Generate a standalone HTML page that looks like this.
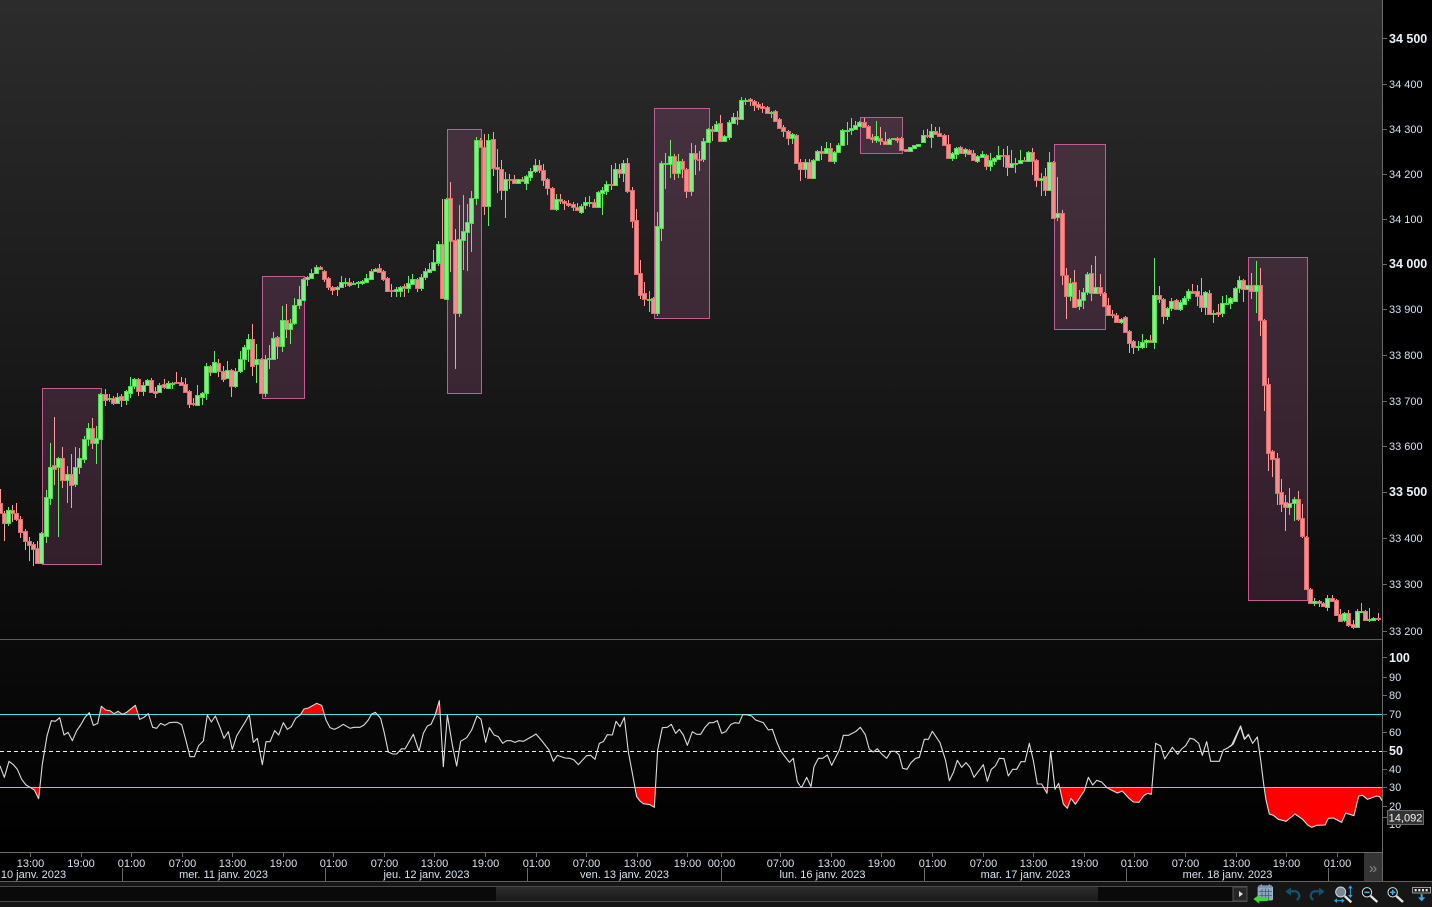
<!DOCTYPE html>
<html lang="fr"><head><meta charset="utf-8"><title>Chart</title>
<style>
html,body{margin:0;padding:0;background:#000;width:1432px;height:907px;overflow:hidden}
svg{display:block;font-family:"Liberation Sans",sans-serif}
.p{font-size:11px;fill:#d2e2f4}
.b{font-size:12.5px;font-weight:bold;fill:#e8f2fc}
.t{font-size:11px;fill:#d6e4f2;text-anchor:middle}
</style></head><body>
<svg width="1432" height="907" viewBox="0 0 1432 907" xmlns="http://www.w3.org/2000/svg">
<defs>
<linearGradient id="bg" x1="0" y1="0" x2="0" y2="1"><stop offset="0" stop-color="#2c2c2c"/><stop offset="1" stop-color="#0a0a0a"/></linearGradient>
<linearGradient id="bg2" x1="0" y1="0" x2="0" y2="1"><stop offset="0" stop-color="#0b0b0b"/><stop offset="1" stop-color="#000"/></linearGradient>
<linearGradient id="th" x1="0" y1="0" x2="0" y2="1"><stop offset="0" stop-color="#2c2c2c"/><stop offset="1" stop-color="#1a1a1a"/></linearGradient>
</defs>
<rect width="1432" height="907" fill="#000"/>
<rect width="1382" height="639" fill="url(#bg)"/>
<rect y="640" width="1382" height="212" fill="url(#bg2)"/>

<g fill="#c864a0" fill-opacity=".2" stroke="#c25c92" stroke-width="1">
<rect x="42.5" y="388.5" width="59" height="176"/>
<rect x="262.5" y="276.5" width="42" height="122"/>
<rect x="447.5" y="129.5" width="34" height="264"/>
<rect x="654.5" y="108.5" width="55" height="210"/>
<rect x="860.5" y="117.5" width="42" height="36"/>
<rect x="1054.5" y="144.5" width="51" height="185"/>
<rect x="1248.5" y="257.5" width="59" height="343"/>
</g>

<!-- wicks -->
<path transform="translate(-.5 0)" fill="none" stroke="#ff9c9c" stroke-width="1" d="M1 489V514M5 511V541M13 505V522M17 503V521M21 516V538M26 529V550M30 537V561M34 542V566M38 541V564M55 417V485M63 447V488M72 454V508M93 418V449M106 389V406M114 396V405M122 394V407M139 378V396M152 378V393M156 387V398M165 379V389M177 372V384M182 377V386M186 378V393M190 390V408M194 398V406M211 365V376M219 359V377M224 366V382M232 369V397M253 324V376M262 358V394M278 336V359M287 304V338M321 266V270M325 270V282M329 277V290M333 286V295M350 278V287M380 264V273M384 270V281M388 277V292M392 284V297M405 284V297M418 278V292M443 199V299M451 182V272M456 229V369M481 138V148M485 134V215M494 132V176M498 149V193M502 160V200M510 174V189M515 175V184M523 177V182M540 160V173M544 164V186M548 178V195M553 187V210M561 194V204M565 200V210M569 200V207M574 202V211M578 203V211M595 199V208M612 165V190M620 164V178M628 158V193M633 187V228M637 209V275M641 260V299M645 282V306M654 297V314M675 154V180M683 159V178M687 168V198M696 145V175M700 151V171M713 126V141M721 115V142M738 111V125M751 98V106M755 100V111M759 102V110M763 103V113M768 106V114M776 110V122M780 118V129M784 125V137M789 130V145M797 134V164M801 159V181M810 159V179M822 146V160M831 143V162M865 118V128M869 125V139M873 134V143M881 127V145M886 132V145M898 137V143M902 137V151M928 129V138M936 127V135M940 127V137M945 134V146M949 135V159M961 146V154M970 149V155M974 150V161M987 154V170M1004 149V167M1008 146V176M1025 157V162M1033 148V175M1037 159V187M1046 168V196M1054 161V219M1063 210V285M1067 268V319M1075 270V308M1092 265V301M1101 274V296M1105 292V307M1109 298V316M1113 310V318M1117 313V323M1126 316V333M1130 330V353M1134 340V354M1151 335V343M1160 286V303M1164 298V324M1177 299V310M1193 284V294M1198 285V306M1202 278V312M1210 290V315M1219 304V317M1244 279V302M1252 273V299M1261 268V336M1265 319V411M1269 378V471M1273 450V477M1278 453V505M1282 479V512M1286 495V531M1299 491V521M1303 504V538M1307 536V590M1311 588V604M1320 600V607M1324 602V607M1333 595V602M1337 599V616M1341 609V622M1349 610V627M1354 620V629M1366 610V621M1379 613V621"/>
<path transform="translate(-.5 0)" fill="none" stroke="#62ec62" stroke-width="1" d="M9 507V526M42 532V564M47 490V543M51 443V505M59 457V537M68 466V503M76 447V487M80 448V474M85 436V463M89 423V446M97 426V464M101 393V440M110 394V402M118 393V404M127 390V405M131 377V398M135 378V389M144 382V396M148 379V386M160 383V393M169 381V389M173 382V389M198 385V406M203 392V405M207 363V400M215 351V373M228 361V379M236 368V388M241 351V373M245 345V370M249 334V362M257 344V383M266 355V397M270 345V369M274 332V360M283 306V352M291 319V344M295 298V325M300 286V309M304 278V301M308 276V286M312 269V279M317 265V274M338 286V296M342 276V288M346 278V287M354 281V285M359 281V288M363 280V285M367 274V283M372 269V280M376 268V272M397 287V297M401 286V297M409 276V293M413 274V285M422 274V291M426 268V280M430 263V273M434 250V271M439 241V266M447 198V300M460 205V317M464 195V270M468 204V271M472 191V252M477 137V205M489 134V226M506 172V218M527 175V190M531 168V181M536 159V173M557 194V211M582 204V214M586 197V209M590 196V207M599 191V208M603 187V215M607 181V195M616 163V186M624 160V182M650 291V312M658 212V316M662 161V241M666 153V189M671 140V178M679 154V178M692 143V196M704 138V162M709 128V143M717 121V132M725 135V142M730 120V140M734 113V124M742 97V120M746 98V105M772 111V118M793 133V144M806 159V178M814 159V179M818 150V161M827 142V154M835 151V164M839 143V153M843 129V146M848 122V145M852 118V135M856 121V130M860 121V127M877 121V143M890 138V145M924 130V143M932 124V148M953 152V161M957 147V159M966 148V157M978 155V163M983 151V158M991 153V171M995 157V165M999 146V160M1012 150V168M1016 158V173M1021 150V164M1029 151V162M1042 173V196M1050 152V191M1058 177V221M1071 278V301M1080 290V310M1084 288V309M1088 272V295M1096 256V294M1122 318V324M1139 341V351M1143 334V349M1147 339V348M1155 258V349M1168 307V320M1172 298V311M1181 300V311M1185 296V305M1189 289V301M1206 291V315M1214 310V323M1223 296V317M1227 295V305M1231 297V309M1236 287V302M1240 276V293M1257 261V313M1290 488V515M1295 497V521M1315 598V606M1328 595V611M1345 612V622M1358 609V628M1362 603V613M1370 608V622M1374 617V621"/>

<!-- bodies -->
<path transform="translate(-.5 .5)" fill="#f28e8e" stroke="#e46c6c" stroke-width="1" d="M-1 503h4v10h-4zM3 513h4v10h-4zM11 510h4v3h-4zM15 513h4v6h-4zM19 519h4v13h-4zM24 531h4v10h-4zM28 541h4v4h-4zM32 544h4v5h-4zM36 548h4v15h-4zM53 465h4v4h-4zM61 458h4v22h-4zM70 474h4v11h-4zM91 428h4v15h-4zM104 394h4v6h-4zM112 398h4v5h-4zM120 396h4v4h-4zM137 379h4v12h-4zM150 380h4v12h-4zM154 391h4v2h-4zM163 384h4v3h-4zM175 382h4v1h-4zM180 382h4v3h-4zM184 384h4v8h-4zM188 391h4v13h-4zM192 403h4v1h-4zM209 366h4v6h-4zM217 363h4v8h-4zM222 371h4v8h-4zM230 370h4v16h-4zM251 339h4v27h-4zM260 359h4v34h-4zM276 337h4v9h-4zM285 320h4v9h-4zM319 267h4v2h-4zM323 271h4v8h-4zM327 278h4v9h-4zM331 287h4v3h-4zM348 282h4v3h-4zM378 268h4v4h-4zM382 271h4v8h-4zM386 278h4v13h-4zM390 290h4v1h-4zM403 286h4v2h-4zM416 279h4v9h-4zM441 244h4v54h-4zM449 198h4v43h-4zM454 240h4v73h-4zM479 140h4v7h-4zM483 147h4v59h-4zM492 139h4v29h-4zM496 167h4v2h-4zM500 169h4v21h-4zM508 179h4v1h-4zM513 179h4v4h-4zM521 179h4v2h-4zM538 165h4v5h-4zM542 170h4v10h-4zM546 179h4v9h-4zM551 188h4v21h-4zM559 199h4v2h-4zM563 201h4v2h-4zM567 203h4v2h-4zM572 204h4v3h-4zM576 207h4v3h-4zM593 202h4v5h-4zM610 184h4v1h-4zM618 169h4v4h-4zM626 163h4v28h-4zM631 190h4v31h-4zM635 220h4v54h-4zM639 273h4v22h-4zM643 293h4v6h-4zM652 298h4v15h-4zM673 156h4v17h-4zM681 161h4v8h-4zM685 169h4v22h-4zM694 153h4v6h-4zM698 159h4v1h-4zM711 129h4v2h-4zM719 123h4v18h-4zM736 117h4v2h-4zM749 99h4v2h-4zM753 101h4v4h-4zM757 104h4v3h-4zM761 106h4v2h-4zM766 107h4v6h-4zM774 111h4v10h-4zM778 119h4v9h-4zM782 127h4v4h-4zM787 131h4v7h-4zM795 135h4v28h-4zM799 162h4v7h-4zM808 162h4v16h-4zM820 151h4v2h-4zM829 148h4v13h-4zM863 122h4v5h-4zM867 126h4v12h-4zM871 137h4v2h-4zM879 138h4v3h-4zM884 141h4v3h-4zM896 138h4v2h-4zM900 138h4v12h-4zM905 149h4v2h-4zM926 135h4v1h-4zM934 131h4v3h-4zM938 133h4v3h-4zM943 135h4v10h-4zM947 144h4v14h-4zM959 147h4v6h-4zM968 150h4v4h-4zM972 153h4v7h-4zM985 155h4v11h-4zM1002 155h4v1h-4zM1006 155h4v12h-4zM1023 160h4v1h-4zM1031 152h4v9h-4zM1035 160h4v20h-4zM1044 176h4v14h-4zM1052 162h4v56h-4zM1061 213h4v62h-4zM1065 275h4v21h-4zM1073 282h4v25h-4zM1090 273h4v20h-4zM1099 287h4v6h-4zM1103 293h4v13h-4zM1107 305h4v10h-4zM1111 314h4v1h-4zM1115 315h4v7h-4zM1124 317h4v15h-4zM1128 331h4v12h-4zM1132 341h4v6h-4zM1149 340h4v2h-4zM1158 295h4v4h-4zM1162 299h4v17h-4zM1175 300h4v9h-4zM1191 291h4v2h-4zM1196 291h4v5h-4zM1200 295h4v12h-4zM1208 293h4v21h-4zM1217 312h4v2h-4zM1242 280h4v9h-4zM1250 285h4v6h-4zM1259 285h4v35h-4zM1263 320h4v65h-4zM1267 384h4v69h-4zM1271 451h4v8h-4zM1276 458h4v35h-4zM1280 492h4v12h-4zM1284 502h4v5h-4zM1297 499h4v20h-4zM1301 518h4v18h-4zM1305 537h4v52h-4zM1309 589h4v14h-4zM1318 601h4v2h-4zM1322 603h4v3h-4zM1331 598h4v3h-4zM1335 600h4v15h-4zM1339 614h4v7h-4zM1347 613h4v12h-4zM1352 624h4v3h-4zM1364 611h4v9h-4zM1377 618h4v1h-4z"/>
<path transform="translate(-.5 .5)" fill="#8aea8a" stroke="#4cdc4c" stroke-width="1" d="M7 510h4v13h-4zM40 533h4v30h-4zM45 497h4v39h-4zM49 467h4v31h-4zM57 458h4v9h-4zM66 474h4v6h-4zM74 467h4v17h-4zM78 458h4v9h-4zM83 439h4v20h-4zM87 428h4v11h-4zM95 438h4v5h-4zM99 394h4v45h-4zM108 398h4v1h-4zM116 397h4v6h-4zM125 391h4v9h-4zM129 386h4v7h-4zM133 379h4v7h-4zM142 385h4v6h-4zM146 380h4v5h-4zM158 385h4v7h-4zM167 383h4v5h-4zM171 383h4v1h-4zM196 395h4v10h-4zM201 393h4v4h-4zM205 366h4v27h-4zM213 362h4v10h-4zM226 370h4v8h-4zM234 371h4v15h-4zM239 359h4v12h-4zM243 347h4v12h-4zM247 339h4v10h-4zM255 359h4v5h-4zM264 359h4v34h-4zM268 358h4v1h-4zM272 338h4v21h-4zM281 320h4v26h-4zM289 323h4v6h-4zM293 305h4v18h-4zM298 299h4v6h-4zM302 279h4v21h-4zM306 277h4v2h-4zM310 273h4v5h-4zM315 267h4v6h-4zM336 287h4v2h-4zM340 282h4v5h-4zM344 282h4v1h-4zM352 283h4v1h-4zM357 282h4v1h-4zM361 281h4v2h-4zM365 278h4v4h-4zM370 271h4v8h-4zM374 269h4v2h-4zM395 289h4v2h-4zM399 287h4v4h-4zM407 283h4v5h-4zM411 279h4v5h-4zM420 277h4v11h-4zM424 271h4v6h-4zM428 269h4v3h-4zM432 262h4v8h-4zM437 244h4v19h-4zM445 199h4v100h-4zM458 239h4v74h-4zM462 231h4v9h-4zM466 222h4v10h-4zM470 198h4v25h-4zM475 140h4v58h-4zM487 140h4v66h-4zM504 179h4v11h-4zM517 179h4v4h-4zM525 176h4v7h-4zM529 171h4v6h-4zM534 165h4v6h-4zM555 199h4v10h-4zM580 206h4v6h-4zM584 202h4v3h-4zM588 202h4v1h-4zM597 192h4v15h-4zM601 190h4v3h-4zM605 184h4v7h-4zM614 169h4v16h-4zM622 163h4v10h-4zM648 299h4v1h-4zM656 226h4v87h-4zM660 163h4v65h-4zM664 163h4v1h-4zM669 156h4v8h-4zM677 161h4v12h-4zM690 153h4v38h-4zM702 141h4v18h-4zM707 129h4v13h-4zM715 124h4v7h-4zM723 136h4v5h-4zM728 122h4v15h-4zM732 117h4v6h-4zM740 100h4v19h-4zM744 100h4v1h-4zM770 112h4v1h-4zM791 134h4v4h-4zM804 162h4v7h-4zM812 160h4v18h-4zM816 151h4v9h-4zM825 148h4v5h-4zM833 152h4v9h-4zM837 145h4v7h-4zM841 130h4v15h-4zM846 130h4v1h-4zM850 128h4v2h-4zM854 125h4v4h-4zM858 122h4v4h-4zM875 136h4v4h-4zM888 139h4v5h-4zM892 138h4v1h-4zM909 147h4v4h-4zM913 145h4v3h-4zM917 144h4v2h-4zM922 135h4v7h-4zM930 131h4v6h-4zM951 153h4v5h-4zM955 148h4v6h-4zM964 149h4v4h-4zM976 156h4v5h-4zM981 154h4v3h-4zM989 160h4v6h-4zM993 158h4v3h-4zM997 155h4v4h-4zM1010 163h4v4h-4zM1014 163h4v1h-4zM1019 160h4v3h-4zM1027 152h4v9h-4zM1040 178h4v2h-4zM1048 162h4v28h-4zM1056 213h4v4h-4zM1069 283h4v13h-4zM1078 299h4v7h-4zM1082 292h4v8h-4zM1086 274h4v18h-4zM1094 287h4v6h-4zM1120 319h4v3h-4zM1137 346h4v1h-4zM1141 342h4v5h-4zM1145 340h4v2h-4zM1153 295h4v47h-4zM1166 308h4v8h-4zM1170 301h4v7h-4zM1179 302h4v7h-4zM1183 298h4v6h-4zM1187 291h4v7h-4zM1204 292h4v15h-4zM1212 313h4v1h-4zM1221 303h4v10h-4zM1225 303h4v1h-4zM1229 298h4v5h-4zM1234 288h4v13h-4zM1238 280h4v8h-4zM1246 285h4v4h-4zM1255 285h4v6h-4zM1288 503h4v4h-4zM1293 499h4v4h-4zM1313 601h4v2h-4zM1326 598h4v9h-4zM1343 613h4v7h-4zM1356 611h4v16h-4zM1360 611h4v1h-4zM1368 619h4v1h-4zM1372 618h4v2h-4z"/>

<!-- panel separators -->
<rect y="639" width="1382" height="1" fill="#5c5c5c"/>

<!-- RSI fills -->
<g transform="translate(0 690) scale(.33333)" fill="#f00">
<polygon points="88,292 103,300 116,326 118,292"/>
<polygon points="300,73 304,49 317,60 330,62 342,71 354,64 367,73 375,70 380,67 406,46 414,73"/>
<polygon points="904,73 912,57 925,54 938,47 950,40 965,46 972,73"/>
</g>
<g transform="translate(350 690) scale(.33333)" fill="#f00">
<polygon points="256,73 268,32 270,73"/>
<polygon points="858,292 860,320 870,333 880,341 900,344 913,352 917,292"/>
</g>
<g transform="translate(800 690) scale(.33333)" fill="#f00">
<polygon points="735,292 741,310 742,292"/>
<polygon points="778,292 790,342 802,355 813,325 826,343 853,302 858,292"/>
<polygon points="912,292 930,298 952,309 967,303 985,323 1000,336 1017,337 1032,316 1043,310 1054,313 1056,292"/>
</g>
<g transform="translate(1230 640) scale(.33333)" fill="#f00">
<polygon points="102,441 108,480 118,522 130,526 145,538 168,544 195,522 218,538 233,555 245,562 260,556 285,555 295,535 310,534 335,547 347,519 372,527 386,468 398,466 412,478 440,468 449,470 456,482 456,441"/>
</g>

<!-- RSI levels -->
<rect y="714" width="1382" height="1" fill="#3fe8e8"/>
<rect y="787" width="1382" height="1" fill="#3fe8e8"/>
<path d="M0 751.5H1382" stroke="#eee" stroke-width="1" stroke-dasharray="4 3"/>

<!-- RSI line -->
<g fill="none" stroke="#dcdcdc" stroke-width="3.3" stroke-linejoin="round">
<polyline transform="translate(0 690) scale(.33333)" points="0,228 13,262 27,214 40,224 52,238 65,268 78,285 90,292 103,300 116,326 127,222 141,138 154,92 166,94 179,83 192,135 204,127 217,152 230,122 242,105 255,82 268,68 280,106 293,100 304,49 317,60 330,62 342,71 354,64 367,73 380,67 406,46 419,88 432,82 445,71 458,112 470,115 482,100 495,106 508,98 520,97 532,97 545,104 558,152 570,200 583,200 596,167 610,153 622,75 634,96 646,78 660,112 672,145 685,125 697,178 710,138 722,118 735,97 748,74 760,157 772,145 787,224 798,155 810,155 824,122 836,135 850,98 862,118 874,110 887,85 900,76 912,57 925,54 938,47 950,40 965,46 978,90 990,113 1003,118 1016,112 1030,103 1050,115"/>
<polyline transform="translate(350 690) scale(.33333)" points="0,115 12,112 30,112 42,105 55,90 65,72 76,67 92,85 102,125 115,186 128,192 140,192 155,176 165,177 190,133 207,184 220,130 232,108 243,103 255,77 268,32 280,230 292,75 308,170 320,228 332,154 350,143 365,120 381,78 393,88 407,157 418,113 432,135 445,140 458,160 470,152 482,152 495,157 507,152 520,154 545,140 558,132 572,148 597,180 610,214 622,196 645,204 660,205 672,210 685,224 710,197 722,196 735,208 748,160 760,155 772,134 787,135 798,94 810,110 823,82 835,185 860,320 870,333 880,341 900,344 913,352 923,180 937,113 952,112 964,103 977,130 988,118 1000,135 1012,166 1027,125 1040,133 1052,133 1065,112 1078,98 1090,98 1102,92 1115,130 1127,125 1143,103 1155,98 1167,100 1178,74 1190,74 1205,78 1217,90 1240,98 1255,120 1267,118 1280,155 1292,183 1318,217 1330,205 1342,275 1350,287"/>
<polyline transform="translate(800 690) scale(.33333)" points="0,290 6,290 20,262 33,290 42,230 55,205 68,205 82,195 95,226 119,178 130,136 145,136 168,124 181,112 196,134 208,178 220,186 232,176 245,192 260,205 273,184 285,184 297,194 308,235 321,238 333,218 347,205 358,202 373,148 385,148 397,124 420,158 437,212 448,272 460,248 472,211 485,232 498,218 510,232 522,262 550,224 562,274 574,238 586,228 598,205 612,206 625,258 638,238 650,238 663,215 675,215 688,160 700,212 712,282 725,282 741,310 752,184 765,298 776,280 790,342 802,355 813,325 826,343 853,302 865,262 878,285 890,271 905,276 920,292 930,298 952,309 967,303 985,323 1000,336 1017,337 1032,316 1043,310 1054,313 1067,160 1082,168 1094,207 1117,172 1133,193 1145,177 1157,167 1170,145 1182,148 1196,160 1207,196 1220,155 1232,214 1258,214 1270,180 1283,174 1295,165 1321,110 1333,148 1345,135 1350,142"/>
<polyline transform="translate(1230 640) scale(.33333)" points="0,320 10,312 32,258 44,297 55,283 68,310 82,291 92,360 102,440 108,480 118,522 130,526 145,538 168,544 195,522 218,538 233,555 245,562 260,556 285,555 295,535 310,534 335,547 347,519 372,527 386,468 398,466 412,478 440,468 449,470 456,482"/>
</g>

<!-- right axis -->
<rect x="1382" y="0" width="1" height="881" fill="#6a6a6a"/>
<path stroke="#6a6a6a" stroke-width="1" d="M1383 38.500h4M1383 84.500h4M1383 129.500h4M1383 174.500h4M1383 219.500h4M1383 264.500h4M1383 309.500h4M1383 355.500h4M1383 401.500h4M1383 446.500h4M1383 492.500h4M1383 538.500h4M1383 584.500h4M1383 631.500h4M1383 657.500h4M1383 677.500h4M1383 695.500h4M1383 714.500h4M1383 732.500h4M1383 751.500h4M1383 769.500h4M1383 787.500h4M1383 806.500h4M1383 817.500h4"/>
<text class="b" x="1389" y="43">34 500</text>
<text class="p" x="1389" y="88">34 400</text>
<text class="p" x="1389" y="133">34 300</text>
<text class="p" x="1389" y="178">34 200</text>
<text class="p" x="1389" y="223">34 100</text>
<text class="b" x="1389" y="268">34 000</text>
<text class="p" x="1389" y="313">33 900</text>
<text class="p" x="1389" y="359">33 800</text>
<text class="p" x="1389" y="405">33 700</text>
<text class="p" x="1389" y="450">33 600</text>
<text class="b" x="1389" y="496">33 500</text>
<text class="p" x="1389" y="542">33 400</text>
<text class="p" x="1389" y="588">33 300</text>
<text class="p" x="1389" y="635">33 200</text>
<text class="b" x="1389" y="662">100</text>
<text class="p" x="1389" y="681">90</text>
<text class="p" x="1389" y="699">80</text>
<text class="p" x="1389" y="718">70</text>
<text class="p" x="1389" y="736">60</text>
<text class="b" x="1389" y="755">50</text>
<text class="p" x="1389" y="773">40</text>
<text class="p" x="1389" y="791">30</text>
<text class="p" x="1389" y="810">20</text>
<text class="p" x="1389" y="828">10</text>
<rect x="1387.500" y="810.500" width="36" height="14" fill="#333" stroke="#6a6a6a"/>
<text x="1405.500" y="821.500" text-anchor="middle" style="font-size:11px;fill:#f2f6fa">14,092</text>

<!-- time axis -->
<rect y="852" width="1382" height="1" fill="#6a6a6a"/>
<path stroke="#6a6a6a" stroke-width="1" d="M30.500 853v4M81.500 853v4M131.500 853v4M182.500 853v4M232.500 853v4M283.500 853v4M333.500 853v4M384.500 853v4M434.500 853v4M485.500 853v4M536.500 853v4M586.500 853v4M637.500 853v4M687.500 853v4M721.500 853v4M780.500 853v4M831.500 853v4M881.500 853v4M932.500 853v4M983.500 853v4M1033.500 853v4M1084.500 853v4M1134.500 853v4M1185.500 853v4M1236.500 853v4M1286.500 853v4M1337.500 853v4M122.500 868v13M325.500 868v13M527.500 868v13M721.500 868v13M924.500 868v13M1126.500 868v13M1328.500 868v13"/>
<g class="tt">
<text class="t" x="30.500" y="867">13:00</text><text class="t" x="81" y="867">19:00</text><text class="t" x="131.500" y="867">01:00</text><text class="t" x="182.500" y="867">07:00</text><text class="t" x="232.500" y="867">13:00</text><text class="t" x="283.500" y="867">19:00</text><text class="t" x="333.500" y="867">01:00</text><text class="t" x="384.500" y="867">07:00</text><text class="t" x="434.500" y="867">13:00</text><text class="t" x="485.500" y="867">19:00</text><text class="t" x="536.500" y="867">01:00</text><text class="t" x="586.500" y="867">07:00</text><text class="t" x="637.500" y="867">13:00</text><text class="t" x="687.500" y="867">19:00</text><text class="t" x="721.500" y="867">00:00</text><text class="t" x="780.500" y="867">07:00</text><text class="t" x="831.500" y="867">13:00</text><text class="t" x="881.500" y="867">19:00</text><text class="t" x="932.500" y="867">01:00</text><text class="t" x="983.500" y="867">07:00</text><text class="t" x="1033.500" y="867">13:00</text><text class="t" x="1084.500" y="867">19:00</text><text class="t" x="1134.500" y="867">01:00</text><text class="t" x="1185.500" y="867">07:00</text><text class="t" x="1236.500" y="867">13:00</text><text class="t" x="1286.500" y="867">19:00</text><text class="t" x="1337.500" y="867">01:00</text>
<text class="t" x="33.500" y="878">10 janv. 2023</text><text class="t" x="223.500" y="878">mer. 11 janv. 2023</text><text class="t" x="426.500" y="878">jeu. 12 janv. 2023</text><text class="t" x="624.500" y="878">ven. 13 janv. 2023</text><text class="t" x="822.500" y="878">lun. 16 janv. 2023</text><text class="t" x="1025.500" y="878">mar. 17 janv. 2023</text><text class="t" x="1227.500" y="878">mer. 18 janv. 2023</text>
</g>
<rect x="1364" y="853" width="18" height="28" fill="#343434"/>
<text x="1373" y="873" text-anchor="middle" style="font-size:15px;fill:#8a8a8a">»</text>

<!-- bottom bar -->
<rect y="881" width="1432" height="26" fill="#161616"/>
<rect y="881" width="1432" height="1" fill="#5e5e5e"/>
<rect y="886" width="1248" height="16" fill="#0a0a0a"/>
<rect x="-1" y="886.500" width="1248" height="15" fill="none" stroke="#4a4a4a"/>
<rect x="496" y="887" width="602" height="14" fill="url(#th)"/>
<rect x="1233" y="887" width="14" height="14" fill="#262626" stroke="#555"/>
<path d="M1239 891l4 3-4 3z" fill="#ddd"/>

<!-- toolbar icons -->
<g transform="translate(1180 840) scale(.33333)">
<!-- calendar -->
<rect x="234" y="140" width="44" height="40" rx="3" fill="#8ea6c0" stroke="#a8c0d8" stroke-width="2"/>
<path d="M244 134v12M268 134v12" stroke="#cfdce8" stroke-width="4"/>
<rect x="236" y="136" width="40" height="8" fill="#7a96b4"/>
<path d="M236 155h40M236 167h40M246 146v34M256 146v34M266 146v34" stroke="#3c5064" stroke-width="2"/>
<path d="M220 177l18-13v8h24v11h-24v8z" fill="#3fd63f"/>
<!-- undo -->
<path d="M330 154h10a14 14 0 0 1 10 26" fill="none" stroke="#15506e" stroke-width="7"/>
<path d="M316 155l17-13v25z" fill="#15506e"/>
<!-- redo -->
<path d="M420 154h-10a14 14 0 0 0-10 26" fill="none" stroke="#15506e" stroke-width="7"/>
<path d="M434 155l-17-13v25z" fill="#15506e"/>
<!-- zoom fit -->
<circle cx="482" cy="156" r="15" fill="#7a8894" stroke="#cfd6dc" stroke-width="3"/>
<path d="M494 168l20 19" stroke="#e4e4e4" stroke-width="7"/>
<path d="M511 141v28" stroke="#2fa4e8" stroke-width="3"/><path d="M511 136l-7 9h14zM511 174l-7-9h14z" fill="#2fa4e8"/>
<path d="M468 182h20" stroke="#2fa4e8" stroke-width="3"/><path d="M462 182l9-7v14zM494 182l-9-7v14z" fill="#2fa4e8"/>
<!-- zoom out -->
<circle cx="561" cy="157" r="14" fill="#050505" stroke="#e0e0e0" stroke-width="3"/>
<path d="M553 157h16" stroke="#35b0f0" stroke-width="5"/>
<path d="M572 168l20 18" stroke="#e4e4e4" stroke-width="7"/>
<!-- zoom in -->
<circle cx="638" cy="157" r="14" fill="#050505" stroke="#e0e0e0" stroke-width="3"/>
<path d="M630 157h16M638 149v16" stroke="#35b0f0" stroke-width="5"/>
<path d="M649 168l20 18" stroke="#e4e4e4" stroke-width="7"/>
<!-- keyboard -->
<rect x="698" y="142" width="54" height="17" fill="#1c1c1c" stroke="#d8d8d8" stroke-width="2"/>
<path d="M704 147h6v7h-6zM715 147h6v7h-6zM726 147h6v7h-6zM737 147h6v7h-6z" fill="#e8e8e8"/>
<path d="M722 162h6v10h8l-11 12-11-12h8z" fill="#35a8e8"/>
</g>
</svg>
</body></html>
